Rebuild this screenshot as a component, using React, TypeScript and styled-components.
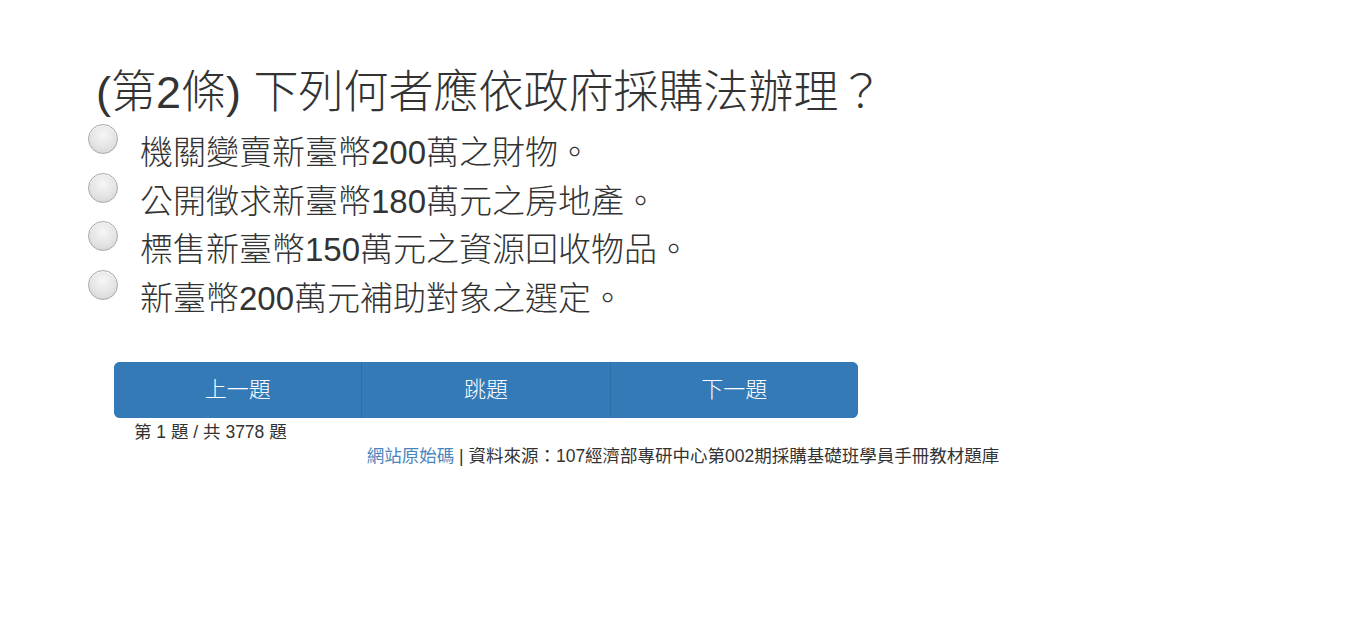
import React from "react";
import styled, { createGlobalStyle } from "styled-components";

const Global = createGlobalStyle`
  html, body { margin: 0; padding: 0; background: #fff; }
  body {
    font-family: "Liberation Sans", Arial, "Noto Sans CJK TC", sans-serif;
    color: #333;
  }
`;

const Page = styled.div`
  padding: 65px 0 0 88px;
  width: 1278px;
`;

const Title = styled.h1`
  margin: 0 0 0 8px;
  font-size: 45px;
  line-height: 56px;
  font-weight: 300;
  color: #333;
  white-space: nowrap;
`;

const Options = styled.div`
  display: flex;
  flex-direction: column;
  margin-top: 3px;
`;

const Option = styled.label`
  display: flex;
  align-items: flex-start;
  height: 48.7px;
  cursor: pointer;
`;

const Radio = styled.span`
  flex: none;
  width: 28px;
  height: 28px;
  border-radius: 50%;
  border: 1px solid #a9a9a9;
  background: radial-gradient(circle at 50% 35%, #f6f6f6 0%, #e4e4e4 55%, #cfcfcf 100%);
  box-shadow: inset 0 1px 1px rgba(255, 255, 255, 0.8);
  margin-top: 0;
`;

const OptionText = styled.span`
  margin: 5px 0 0 22px;
  font-size: 33px;
  line-height: 48px;
  font-weight: 300;
  color: #333;
  white-space: nowrap;
`;

const Buttons = styled.div`
  display: flex;
  width: 744px;
  height: 56px;
  margin: 43px 0 0 26px;
  border-radius: 6px;
  overflow: hidden;
  background: #337ab7;
`;

const NavButton = styled.button`
  flex: 1;
  border: none;
  border-left: 1px solid #2e6da4;
  background: #337ab7;
  color: #fff;
  font-family: "Noto Sans CJK TC", sans-serif;
  font-weight: 300;
  font-size: 22px;
  cursor: pointer;
  padding: 0 0 5px;
  &:first-child { border-left: none; }
`;

const Counter = styled.div`
  margin: 3px 0 0 46px;
  font-size: 17.5px;
  line-height: 22px;
`;

const Footer = styled.div`
  margin: 1px 0 0 -88px;
  width: 1366px;
  text-align: center;
  font-size: 17.5px;
  line-height: 24px;
`;

const Link = styled.a`
  color: #4a86bd;
  text-decoration: none;
`;

const options = [
  "機關變賣新臺幣200萬之財物。",
  "公開徵求新臺幣180萬元之房地產。",
  "標售新臺幣150萬元之資源回收物品。",
  "新臺幣200萬元補助對象之選定。",
];

export default function App() {
  return (
    <Page>
      <Global />
      <Title>(第2條) 下列何者應依政府採購法辦理？</Title>
      <Options>
        {options.map((o) => (
          <Option key={o}>
            <Radio />
            <OptionText>{o}</OptionText>
          </Option>
        ))}
      </Options>
      <Buttons>
        <NavButton>上一題</NavButton>
        <NavButton>跳題</NavButton>
        <NavButton>下一題</NavButton>
      </Buttons>
      <Counter>第 1 題 / 共 3778 題</Counter>
      <Footer>
        <Link href="#">網站原始碼</Link> | 資料來源：107經濟部專研中心第002期採購基礎班學員手冊教材題庫
      </Footer>
    </Page>
  );
}
